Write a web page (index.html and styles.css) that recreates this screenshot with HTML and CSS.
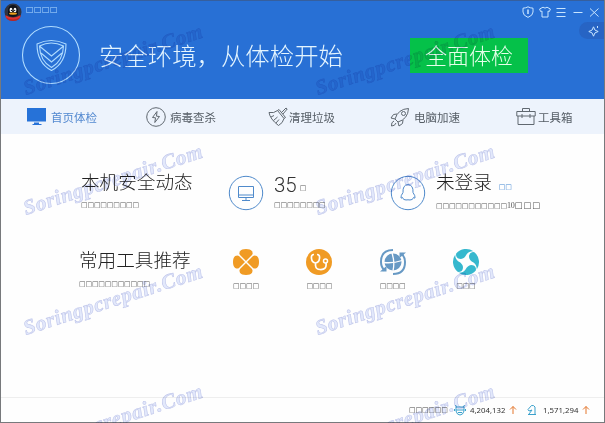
FILE: index.html
```html
<!DOCTYPE html>
<html lang="zh-CN">
<head>
<meta charset="utf-8">
<title>安全体检</title>
<link rel="stylesheet" href="styles.css">
</head>
<body>
<div class="window">
  <header class="header">
    <div class="titlebar">
      <svg class="avatar" viewBox="0 0 18 20"><circle cx="9" cy="10" r="8.500" fill="#30333f"/><path d="M1 13q8 7 16 0q-1 6-8 6t-8-6z" fill="#b92725"/><path d="M4 9q0-6 5-6t5 6v4q-5 4-10 0z" fill="#111318"/><ellipse cx="7" cy="8" rx="1.400" ry="2.200" fill="#fff"/><ellipse cx="11" cy="8" rx="1.400" ry="2.200" fill="#fff"/><circle cx="7.400" cy="8.400" r=".6"/><circle cx="10.700" cy="8.400" r=".6"/><ellipse cx="9" cy="11.600" rx="4" ry="1.200" fill="#eea11c"/><path d="M2 13.500q7 4 14 0v2q-7 4-14 0z" fill="#df3130"/></svg>
      <span class="box app-name">□□□□</span>
      <div class="controls">
        <svg viewBox="0 0 12 12"><path d="M1 2.200Q4 2 6 .8Q8 2 11 2.200V6q0 3.500-5 5.400Q1 9.500 1 6z"/><path d="M6 3.500V8" stroke-width="1.500"/></svg>
        <svg viewBox="0 0 12 12"><path d="M4 1.200Q6 3 8 1.200L11.400 3l-1 2.500-1.400-.4V11H3V5.100l-1.400.4L.6 3z"/></svg>
        <svg viewBox="0 0 12 12"><path d="M1.500 2.500h9M1.500 6.500h9M1.500 10.500h9"/></svg>
        <svg viewBox="0 0 12 12"><path d="M1.500 6.500h9"/></svg>
        <svg viewBox="0 0 12 12"><path d="M2 2.500l8.500 8M10.500 2.500l-8.500 8"/></svg>
      </div>
    </div>
    <div class="hero">
      <svg class="shield" viewBox="0 0 60 60"><circle cx="30" cy="30" r="28.500"/><path d="M16 19Q30 12 45 19Q45 38 30.500 45.500Q16 38 16 19z"/><path d="M18.500 21Q30 15 42.500 21Q42 36 30.500 42.500Q19 36 18.500 21zM19 21.500L30.500 31 42 21.500M20 28L30.500 37 41 28"/></svg>
      <h1>安全环境，从体检开始</h1>
      <button class="check">全面体检</button>
    </div>
    <div class="spark"><svg viewBox="0 0 12 12"><path d="M5.500 1.800Q6 6 10.200 6.500Q6 7 5.500 11.200Q5 7 .8 6.500Q5 6 5.500 1.800zM9.500 1v2"/></svg></div>
  </header>

  <nav class="nav">
    <a class="active"><svg viewBox="0 0 20 20"><path d="M0 1h19v13.500H0zM7 15.500h5V17h2.500v1h-9v-1H7z" fill="#2672d8" stroke="none"/></svg>首页体检</a>
    <a><svg viewBox="0 0 20 20"><circle cx="10" cy="10" r="9.300"/><path d="M11 4.500L6.500 10.500l3 .3-.7 4.700 4.700-6-3-.3z"/></svg>病毒查杀</a>
    <a class="broom"><svg viewBox="0 0 20 20"><path d="M9.500 3.500l6.500 8M11 2.500l6.500 8M9.500 3.500L11 2.500M16 11.500l1.500-1M13.500 5.500L18 1l1.200 1-4.200 5M9.500 3.500Q6 6.500 1 5.500Q2 12 10.500 18.500Q15 16 16 11.500M3 10l3-1.500M5.500 13.500l4-3.500M8 16l3-3.500"/></svg>清理垃圾</a>
    <a><svg viewBox="0 0 20 20"><path d="M5 12Q8 2 18.500 1.500Q18 12 8 15zM7 7Q3 6 1 11l4 1M13 13q1 4-4 6l-1-4M4 14q-3 1-2.500 5Q5 19 6 16"/><circle cx="13.500" cy="6.500" r="2"/></svg>电脑加速</a>
    <a class="box-tools"><svg viewBox="0 0 20 20"><path d="M.8 4.500h18.400v4.500H.8zM2 9v8.500h16V9M6.500 4.500v-3h7v3M6 7v4M14 7v4"/></svg>工具箱</a>
  </nav>

  <main class="content">
    <section class="status">
      <div class="intro"><h2>本机安全动态</h2><p class="tofu">□□□□□□□□□</p></div>
      <div class="stat">
        <svg class="ring" viewBox="0 0 36 36"><circle cx="18" cy="18" r="16.700"/><path d="M10.500 11.500h15v11h-15zM10.500 20h15M18 22.500v3M14 25.500h8"/></svg>
        <div><div class="value"><span class="number">35</span><span class="tofu unit">□</span></div><p class="tofu">□□□□□□□□</p></div>
      </div>
      <div class="stat">
        <svg class="ring" viewBox="0 0 36 36"><circle cx="18" cy="18" r="16.700"/><path d="M13 17.500q-.5-7.500 5-8 5.500.5 5 8 2.500 3.500 2 5.500-1 .3-1.500-.5-.5 1.500-1.500 2-2 .8-4 .3-2 .5-4-.3-1-.5-1.500-2-.5.8-1.500.5-.5-2 2-5.500z"/></svg>
        <div><div class="value"><h2>未登录</h2><span class="tofu login">□□</span></div><p class="tofu">□□□□□□□□□□□<span class="ten">10</span><span class="wide">□□□</span></p></div>
      </div>
    </section>
    <section class="tools">
      <div class="intro"><h2>常用工具推荐</h2><p class="tofu">□□□□□□□□□□□</p></div>
      <div class="tool"><svg viewBox="0 0 28 28"><g fill="#f09b24"><path id="leaf" d="M14 13L8 7Q6.800 5.500 8 3.200Q9.500 1 14 1T20 3.200Q21.200 5.500 20 7z"/><use href="#leaf" transform="rotate(90 14 14)"/><use href="#leaf" transform="rotate(180 14 14)"/><use href="#leaf" transform="rotate(270 14 14)"/></g></svg><span class="tofu">□□□□</span></div>
      <div class="tool"><svg viewBox="0 0 28 28"><circle cx="14" cy="14" r="13" fill="#f09b24"/><path d="M9 6.500q-3 0-2.500 4 .5 4 4 4.500 3.500-.5 4-4.500.5-4-2.500-4M10.500 15v2.500q.5 4 4.500 4 7 .5 6-6.500" fill="none" stroke="#fff" stroke-width="1.700"/><circle cx="20.500" cy="13" r="2" fill="#f09b24" stroke="#fff" stroke-width="1.500"/></svg><span class="tofu">□□□□</span></div>
      <div class="tool"><svg viewBox="0 0 28 28"><circle cx="14" cy="14" r="8.500" fill="#6799c4"/><path d="M13 5q3 9 1 18M5 14.500q9 1 18-2" fill="none" stroke="#fff" stroke-width="1.300"/><path d="M14 2Q2 2 2 14q0 5 3.500 8.500M14 26q12 0 12-12 0-5-3.500-8.500" fill="none" stroke="#6799c4" stroke-width="2"/><path d="M1 23.500h6.500V18zM27 4.500h-6.500V10z" fill="#6799c4"/></svg><span class="tofu">□□□□</span></div>
      <div class="tool"><svg viewBox="0 0 28 28"><g fill="#36b8ce"><path id="blade" d="M4.200 5.600A13 13 0 0 1 21.500 3.300Q17 3 14.500 6.500Q12.500 10.500 9 11Q5 11 4.200 8Q3.900 6.800 4.200 5.600z"/><use href="#blade" transform="rotate(90 14 14)"/><use href="#blade" transform="rotate(180 14 14)"/><use href="#blade" transform="rotate(270 14 14)"/></g></svg><span class="tofu">□□□</span></div>
    </section>
  </main>

  <footer class="footer">
    <span class="tofu">□□□□□□</span>
    <svg class="mark first" viewBox="0 0 12 12"><path d="M2 3h8v4q-1 4-4 4T2 7zM2 6h8M1 1.500l2 1M11 1.500l-2 1M4 8.500h4M.5 5v2M11.500 5v2"/></svg>
    <span class="count">4,204,132</span>
    <svg class="up" viewBox="0 0 8 10"><path d="M4 9V1.500M1 4.500l3-3 3 3"/></svg>
    <svg class="mark second" viewBox="0 0 12 12"><path d="M2 10.500h8M9 10.500V3Q8 1 5.500 1.500L2 5.500l1 1.500 3-1-3 4"/></svg>
    <span class="count">1,571,294</span>
    <svg class="up" viewBox="0 0 8 10"><path d="M4 9V1.500M1 4.500l3-3 3 3"/></svg>
  </footer>

  <svg class="watermark" viewBox="0 0 605 423">
    <g class="on-blue" transform="translate(26 95) rotate(-18)"><text textLength="187">Soringpcrepair.Com</text></g>
    <g class="on-blue" transform="translate(318 95) rotate(-18)"><text textLength="187">Soringpcrepair.Com</text></g>
    <g transform="translate(26 215) rotate(-18)"><text textLength="187">Soringpcrepair.Com</text></g>
    <g transform="translate(318 215) rotate(-18)"><text textLength="187">Soringpcrepair.Com</text></g>
    <g transform="translate(26 335) rotate(-18)"><text textLength="187">Soringpcrepair.Com</text></g>
    <g transform="translate(318 335) rotate(-18)"><text textLength="187">Soringpcrepair.Com</text></g>
    <g transform="translate(26 455) rotate(-18)"><text textLength="187">Soringpcrepair.Com</text></g>
    <g transform="translate(318 455) rotate(-18)"><text textLength="187">Soringpcrepair.Com</text></g>
  </svg>
</div>
</body>
</html>
```
FILE: styles.css
```css
* { box-sizing: border-box; }
body, h1, h2, p { margin: 0; }
body { overflow: hidden; }
svg { display: block; flex: none; }
.window {
  position: relative;
  width: 605px;
  height: 423px;
  display: flex;
  flex-direction: column;
  background: #fefefe;
  border: solid #77797c;
  border-width: 0 1px 1px;
  font-family: "Liberation Sans", "Noto Sans CJK SC", sans-serif;
  color: #333;
}
.header {
  position: relative;
  height: 99px;
  background: #2870d5;
  border-top: 1px solid #365f9d;
}
.titlebar {
  display: flex;
  height: 21px;
  padding: 1px 0 0 3px;
}
.avatar { width: 18px; height: 20px; }
.box {
  font: 8px/16px "DejaVu Sans", sans-serif;
  letter-spacing: .4px;
  color: #b4dcff;
}
.app-name { margin-left: 4px; }
.controls {
  display: flex;
  gap: 4.500px;
  margin: 4px 4px 0 auto;
}
.controls svg, .spark svg {
  width: 12px;
  height: 12px;
  fill: none;
  stroke: #c8e5ff;
}
.spark {
  position: absolute;
  right: 0;
  top: 21px;
  width: 25px;
  height: 17px;
  padding: 3px 0 0 9px;
  border-radius: 9px 0 0 9px;
  background: #2764c4;
}
.hero {
  display: flex;
  align-items: center;
  height: 66px;
  padding-left: 20px;
}
.shield {
  width: 60px;
  height: 60px;
  fill: none;
  stroke: #b0dcff;
  stroke-width: 1.100;
}
.hero h1 {
  width: 292px;
  margin-left: 18px;
  font: 300 24.400px/32px "Noto Sans CJK SC", sans-serif;
  color: #e4f5ff;
  white-space: nowrap;
}
.check {
  width: 118px;
  height: 35px;
  margin-left: 19px;
  padding: 0 0 2px;
  border: 0;
  background: #05c149;
  color: #e6ffe9;
  font: 300 22px/33px "Noto Sans CJK SC", sans-serif;
}
.nav {
  display: grid;
  grid-template-columns: 119px 122px 122px 126px 1fr;
  height: 35px;
  padding-left: 26px;
  background: #edf3fc;
}
.nav a {
  display: flex;
  align-items: center;
  gap: 4px;
  font: 11.500px/18px "Noto Sans CJK SC", sans-serif;
  color: #555d65;
}
.nav .broom { gap: 1px; }
.nav .box-tools { gap: 2px; }
.nav .active { color: #5288d0; }
.nav svg {
  width: 20px;
  height: 20px;
  fill: none;
  stroke: #606870;
}
.content { flex: 1; }
.status, .tools { display: flex; }
.status { height: 77px; padding: 33px 0 0 80px; }
.tools { padding: 34px 0 0 78px; }
h2 {
  font: 300 18.600px/28px "Noto Sans CJK SC", sans-serif;
  color: #222;
  white-space: nowrap;
}
.tofu {
  font: 7px/10px "DejaVu Sans", sans-serif;
  letter-spacing: -.17px;
  color: #555;
  white-space: nowrap;
}
.intro { width: 147px; }
.intro .tofu { margin-top: 5px; }
.tools .intro { width: 146px; }
.tools .intro .tofu { margin-top: 6px; }
.stat { display: flex; width: 162px; }
.stat + .stat { width: 190px; }
.ring {
  width: 36px;
  height: 36px;
  margin: 8px 10px 0 0;
  fill: none;
  stroke: #4f8acb;
}
.value { display: flex; height: 33px; align-items: flex-start; }
.number { font: 300 20.500px/36px Roboto, sans-serif; }
.unit { margin: 16px 0 0 3px; }
.login { margin: 15px 0 0 7px; color: #4387d2; }
.ten { font: 8px/10px "Liberation Serif", serif; }
.wide { font-size: 8.500px; letter-spacing: .7px; }
.tool {
  display: flex;
  flex-direction: column;
  align-items: center;
  width: 42px;
  margin-right: 31.300px;
}
.tool svg { width: 28px; height: 28px; margin-top: 3px; }
.tool .tofu { margin-top: 5px; }
.footer {
  display: flex;
  align-items: center;
  height: 25px;
  padding-left: 408px;
  border-top: 1px solid #eee;
}
.footer .tofu { width: 40px; color: #444; }
.mark { width: 12px; height: 12px; fill: none; stroke: #3ba1cc; }
.first { margin: 0 4px 0 5px; }
.second { margin: 0 5px 0 9px; }
.count {
  width: 38px;
  font: 7.800px/12px "Noto Sans", sans-serif;
  color: #333;
}
.up { width: 8px; height: 10px; margin-left: 1px; fill: none; stroke: #e4762c; }
.watermark {
  position: absolute;
  left: -1px;
  top: 0;
  width: 605px;
  height: 423px;
  pointer-events: none;
  mix-blend-mode: multiply;
}
.watermark text {
  font: italic bold 21px "Liberation Serif", serif;
  fill: #e3e9fc;
  stroke: #c3c9ec;
  stroke-width: .6;
}
.watermark .on-blue text { fill: #e2e6f4; stroke: #cbd2ea; }
```
